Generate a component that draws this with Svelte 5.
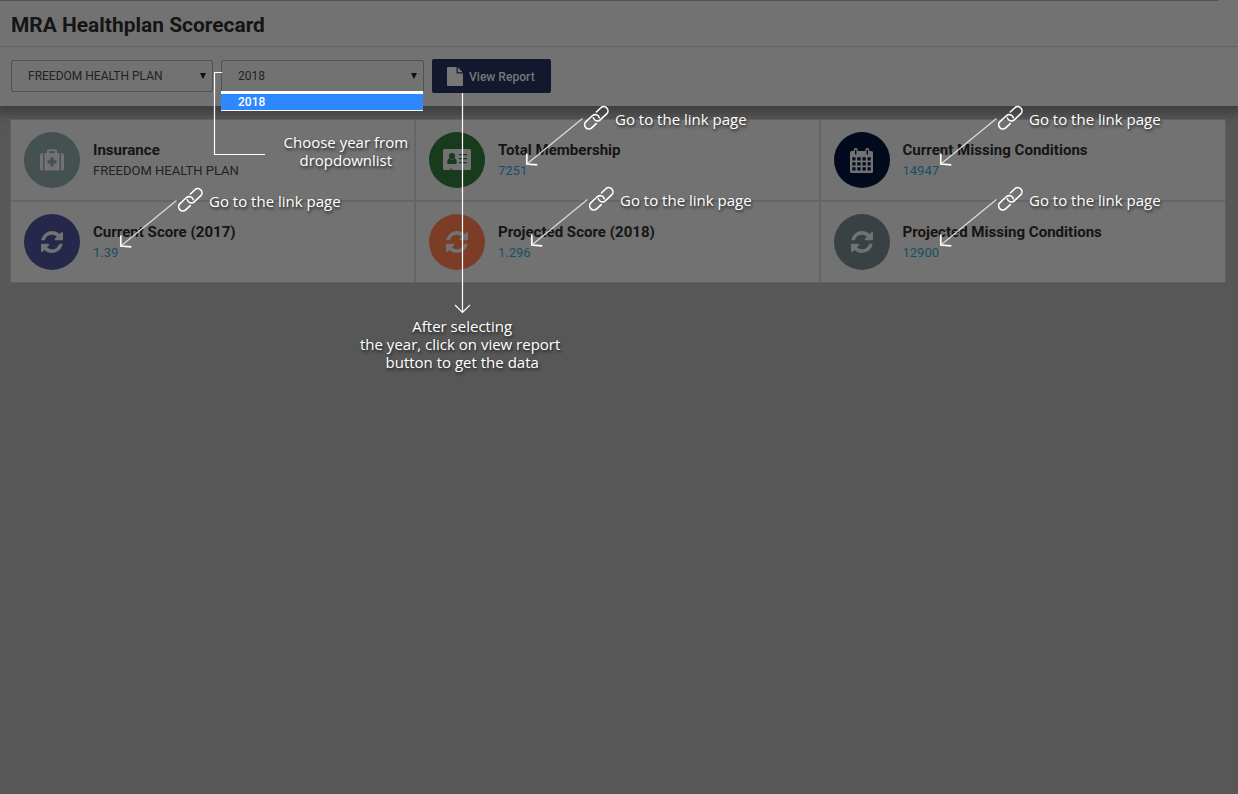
<script>
  const cards = [
    { name: 'Insurance', value: 'FREEDOM HEALTH PLAN', icon: 'medkit', color: '#455051' },
    { name: 'Total Membership', value: '7251', icon: 'idcard', color: '#193b1d', link: true },
    { name: 'Current Missing Conditions', value: '14947', icon: 'calendar', color: '#020a1e', link: true },
    { name: 'Current Score (2017)', value: '1.39', icon: 'refresh', color: '#25284b', link: true },
    { name: 'Projected Score (2018)', value: '1.296', icon: 'refresh', color: '#7c3d26', link: true },
    { name: 'Projected Missing Conditions', value: '12900', icon: 'refresh', color: '#394144', link: true }
  ];
  const hints = [
    { x: 526, y: 105 },
    { x: 940, y: 105 },
    { x: 120, y: 187 },
    { x: 531, y: 186 },
    { x: 940, y: 186 }
  ];
</script>

<div class="page">
  <header>
    <h1>MRA Healthplan Scorecard</h1>
    <div class="filters">
      <div class="select">FREEDOM HEALTH PLAN<i></i></div>
      <div class="select year">2018<i></i>
        <div class="options"><div>2018</div></div>
      </div>
      <div class="button">
        <svg width="16" height="19" viewBox="0 0 16 19"><path d="M1 0h8.5v5.6q0 .9.9.9H16V18q0 1-1 1H1q-1 0-1-1V1q0-1 1-1zM10.7.2l5 5h-5z" /></svg>
        View Report
      </div>
    </div>
  </header>

  <main>
    {#each cards as card}
      <section>
        <div class="circle" style:background={card.color}>
          {#if card.icon === 'medkit'}
            <svg width="24" height="22" viewBox="0 0 24 22">
              <path fill-rule="evenodd" d="M2.6 4H3v17.5h-.4Q0 21.5 0 19V6.500Q0 4 2.600 4zM4.500 4H7V1.800Q7 .3 8.500.3h7q1.500 0 1.500 1.500V4h2.500v17.500h-15zM9 4h6V2.200H9zM10.400 8.500v2.800H7.600v3.100h2.800v2.800h3.200v-2.800h2.800v-3.100h-2.800V8.500zM21 4h.4Q24 4 24 6.500V19q0 2.500-2.600 2.500H21z" />
            </svg>
          {:else if card.icon === 'idcard'}
            <svg width="28" height="22" viewBox="0 0 28 22">
              <path fill-rule="evenodd" d="M1.500 0h25Q28 0 28 1.500v18q0 1.500-1.500 1.500H9v-1.500H7.500V21h-6Q0 21 0 19.500v-18Q0 0 1.500 0zM9 4a3.100 3.100 0 1 0 0 6.200A3.100 3.100 0 0 0 9 4zM6.600 9.600Q4.200 9.600 4.200 13.500 4.200 15 5.600 15h6.800q1.400 0 1.400-1.500 0-3.900-2.400-3.900Q9 12 6.600 9.600zM16 5v1.300h8V5zM16 9v1.300h8V9zM16 13v1.300h8V13z" />
            </svg>
          {:else if card.icon === 'calendar'}
            <svg width="23" height="25" viewBox="0 0 23 25">
              <path fill-rule="evenodd" d="M1.500 3h2.200V2Q3.700 0 5.700 0t2 2v1h7.600V2q0-2 2-2t2 2v1h2.200Q23 3 23 4.500v19q0 1.500-1.500 1.500h-20Q0 25 0 23.500v-19Q0 3 1.500 3zM5 2v4.500h1.400V2zM16.600 2v4.500H18V2zM2.300 9.200v3.400h3.200V9.200zM7.300 9.200v3.400h3.300V9.200zM12.500 9.200v3.400h3.300V9.200zM17.600 9.200v3.400h3.100V9.200zM2.300 14.300v3.300h3.200v-3.300zM7.300 14.300v3.300h3.300v-3.300zM12.500 14.300v3.300h3.300v-3.300zM17.600 14.300v3.300h3.100v-3.300zM2.300 19.300v3.300h3.200v-3.300zM7.300 19.300v3.300h3.300v-3.300zM12.500 19.300v3.300h3.300v-3.300zM17.600 19.300v3.300h3.100v-3.300z" />
            </svg>
          {:else}
            <svg width="22" height="22" viewBox="0 0 1536 1536">
              <path d="M1511 928q0 5-1 7-64 268-268 434.500t-478 166.500q-146 0-282.500-55t-243.500-157l-129 129q-19 19-45 19t-45-19-19-45v-448q0-26 19-45t45-19h448q26 0 45 19t19 45-19 45l-137 137q71 66 161 102t187 36q134 0 250-65t186-179q11-17 53-117 8-23 30-23h192q13 0 22.500 9.500t9.500 22.500zm25-800v448q0 26-19 45t-45 19h-448q-26 0-45-19t-19-45 19-45l138-138q-148-137-349-137-134 0-250 65t-186 179q-11 17-53 117-8 23-30 23h-199q-13 0-22.500-9.500t-9.500-22.500v-7q65-268 270-434.500t480-166.500q146 0 284 55.500t245 156.500l130-129q19-19 45-19t45 19 19 45z" />
            </svg>
          {/if}
        </div>
        <div class="info">
          <h2>{card.name}</h2>
          <span class:link={card.link}>{card.value}</span>
        </div>
      </section>
    {/each}
  </main>

  <svg class="lines" width="1238" height="794" viewBox="0 0 1238 794">
    <path d="M222 72.500h-7.500v82H265" />
    <path d="M462.500 93v219M455 305l7.500 7.500 7.500-7.500" />
  </svg>

  {#each hints as hint}
    <div class="hint" style:left="{hint.x}px" style:top="{hint.y}px">
      <svg width="84" height="62" viewBox="0 0 84 62">
        <path class="thin" d="M56.500 13.500 1.500 58.500" />
        <path class="head" d="M.8 48.500V59l10.500.8" />
        <g transform="translate(70.300 12.800) rotate(-43)">
          <path class="chain" d="M-4 4.200H-10.200a4.200 4.200 0 0 1 0-8.400H-1.500a4.200 4.200 0 0 1 3.700 6.200" />
          <path class="chain" d="M4-4.200H10.200a4.200 4.200 0 0 1 0 8.400H1.500a4.200 4.200 0 0 1-3.700-6.200" />
        </g>
      </svg>
      <span>Go to the link page</span>
    </div>
  {/each}

  <p class="note choose">Choose year from<br />dropdownlist</p>
  <p class="note after"><span>After selecting</span><br />the year, click on view report<br /><span>button to get the data</span></p>
</div>

<style>
  :global(body) { margin: 0; background: #575757; }
  .page {
    position: relative;
    height: 794px;
    overflow: hidden;
    background: #575757;
    font-family: Roboto, sans-serif;
    color: #151515;
  }
  header {
    box-sizing: border-box;
    height: 106px;
    background: #727272;
    box-shadow: 0 4px 10px 4px #3f3f3f;
  }
  header::before {
    content: '';
    display: block;
    width: 1218px;
    height: 1px;
    background: #505050;
  }
  h1 {
    box-sizing: border-box;
    height: 46px;
    margin: 0;
    padding-left: 11px;
    border-bottom: 1px solid #636363;
    font-size: 20.950px;
    line-height: 49px;
    font-weight: 700;
  }
  .filters { display: flex; padding: 12px 11px; }
  .select {
    position: relative;
    box-sizing: border-box;
    width: 202px;
    height: 32px;
    margin: 1px 8px 0 0;
    padding-left: 16px;
    border: 1px solid #525252;
    border-radius: 2px;
    font-size: 12px;
    line-height: 30px;
    color: #222;
  }
  .year { width: 203px; }
  .select i {
    position: absolute;
    right: 6px;
    top: 12px;
    border: 3px solid transparent;
    border-top: 6px solid #111;
    border-bottom: 0;
  }
  .options {
    position: absolute;
    left: -1px;
    top: 30px;
    width: 202px;
    background: #fff;
    padding: 3px 0 1px;
  }
  .options div {
    height: 16px;
    padding-left: 17px;
    background: #2d88ff;
    color: #fff;
    font-weight: 500;
    line-height: 16px;
  }
  .button {
    display: flex;
    align-items: center;
    box-sizing: border-box;
    width: 119px;
    height: 34px;
    padding: 1px 0 0 15px;
    gap: 6px;
    border-radius: 2px;
    background: #13182f;
    color: #777;
    font-size: 12.100px;
    font-weight: 500;
    white-space: nowrap;
  }
  .button svg { fill: #777; flex: none; }
  main {
    position: relative;
    display: grid;
    grid-template-columns: 403px 402.500px 404.500px;
    grid-template-rows: 80px 80px;
    gap: 2px;
    width: 1214px;
    box-sizing: border-box;
    margin: 14px 0 0 11px;
    background: #656565;
    box-shadow: 0 0 0 1px #5f5f5f;
  }
  section {
    display: flex;
    padding: 12px 13px;
    background: #727272;
  }
  .circle {
    display: flex;
    align-items: center;
    justify-content: center;
    width: 56px;
    height: 56px;
    border-radius: 50%;
  }
  .circle svg { fill: #727272; }
  .info { padding: 8px 0 0 13px; }
  h2 { margin: 0; font-size: 15.070px; line-height: 20px; font-weight: 700; }
  .info span { display: block; font-size: 13px; line-height: 21px; color: #222; }
  .info .link { color: #164f66; }
  .lines { position: absolute; left: 0; top: 0; fill: none; stroke: #fff; stroke-width: 1.200; }
  .hint { position: absolute; display: flex; }
  .hint svg { fill: none; stroke: #fff; overflow: visible; }
  .thin { stroke-width: 1.200; stroke: #ddd; }
  .head { stroke-width: 1.700; }
  .chain { stroke-width: 1.600; stroke-linecap: round; }
  .hint span, .note {
    font-family: 'Open Sans', sans-serif;
    font-size: 15px;
    line-height: 18px;
    color: #fff;
    text-shadow: 1px 2px 3px #222;
    white-space: nowrap;
  }
  .hint span { padding: 5px 0 0 5px; }
  .note { position: absolute; margin: 0; text-align: center; }
  .choose { left: 283.500px; top: 133px; }
  .after { left: 360px; top: 317px; }
  .after span { padding-left: 4px; }
</style>
